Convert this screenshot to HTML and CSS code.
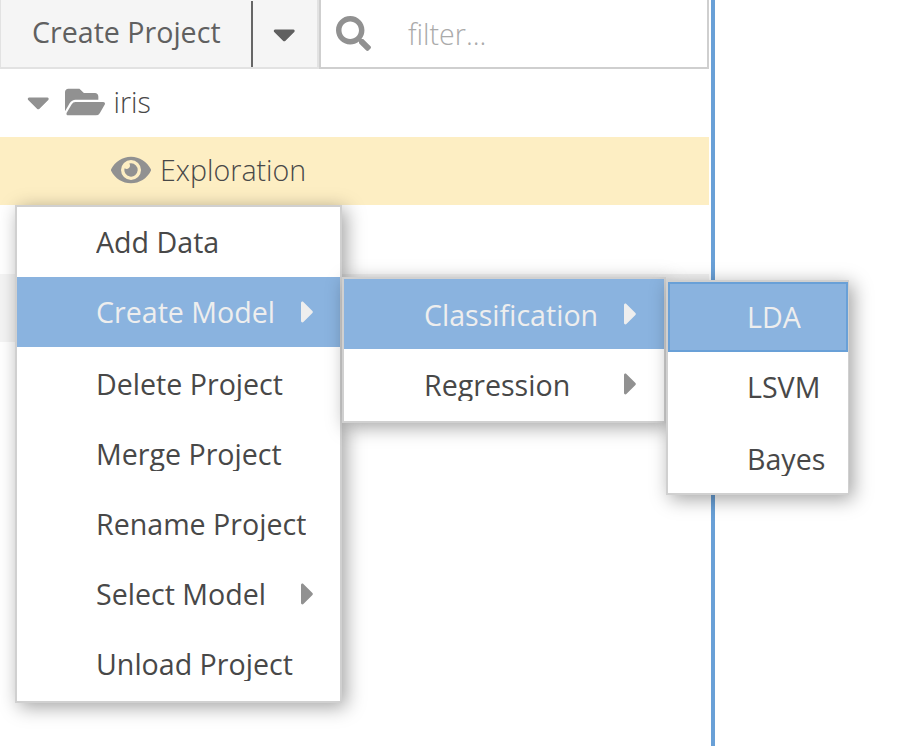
FILE: index.html
```html
<!DOCTYPE html>
<html lang="en">
<head>
<meta charset="utf-8">
<title>Projects</title>
<link rel="stylesheet" href="styles.css">
</head>
<body>
<svg class="defs" aria-hidden="true">
  <symbol id="caret-down" viewBox="0 0 320 512"><path d="M31.3 192h257.3c17.8 0 26.7 21.5 14.1 34.1L174.1 354.8c-7.8 7.8-20.5 7.8-28.3 0L17.2 226.1C4.6 213.5 13.5 192 31.3 192z"/></symbol>
  <symbol id="caret-right" viewBox="0 0 192 512"><path d="M0 384.662V127.338c0-17.818 21.543-26.741 33.941-14.142l128.662 128.662c7.81 7.81 7.81 20.474 0 28.284L33.941 398.804C21.543 411.404 0 402.48 0 384.662z"/></symbol>
  <symbol id="search" viewBox="0 0 512 512"><path d="M505 442.7L405.3 343c-4.5-4.5-10.6-7-17-7H372c27.6-35.3 44-79.7 44-128C416 93.1 322.9 0 208 0S0 93.1 0 208s93.1 208 208 208c48.3 0 92.7-16.4 128-44v16.3c0 6.4 2.5 12.5 7 17l99.7 99.7c9.4 9.4 24.6 9.4 33.9 0l28.3-28.3c9.4-9.4 9.4-24.6.1-34zM208 336c-70.7 0-128-57.2-128-128 0-70.7 57.2-128 128-128 70.7 0 128 57.2 128 128 0 70.7-57.2 128-128 128z"/></symbol>
  <symbol id="folder-open" viewBox="0 0 576 512"><path d="M572.694 292.093L500.27 416.248A63.997 63.997 0 0 1 444.989 448H45.025c-18.523 0-30.064-20.093-20.731-36.093l72.424-124.155A64 64 0 0 1 152 256h399.964c18.523 0 30.064 20.093 20.73 36.093zM152 224h328v-48c0-26.51-21.49-48-48-48H272l-64-64H48C21.49 64 0 85.49 0 112v278.046l69.077-118.418C86.214 242.25 117.989 224 152 224z"/></symbol>
  <symbol id="eye" viewBox="0 0 576 512"><path d="M572.52 241.4C518.29 135.59 410.93 64 288 64S57.68 135.64 3.48 241.41a32.35 32.35 0 0 0 0 29.19C57.71 376.41 165.07 448 288 448s230.32-71.64 284.52-177.41a32.35 32.35 0 0 0 0-29.19zM288 400a144 144 0 1 1 144-144 143.93 143.93 0 0 1-144 144zm0-240a95.31 95.31 0 0 0-25.31 3.79 47.85 47.85 0 0 1-66.9 66.9A95.78 95.78 0 1 0 288 160z"/></symbol>
</svg>
<div class="app">
  <aside class="sidebar">
    <div class="toolbar">
      <div class="split">
        <div class="split-main">Create Project</div>
        <div class="split-drop"><svg class="icon caret"><use href="#caret-down"/></svg></div>
      </div>
      <div class="filter">
        <svg class="icon search"><use href="#search"/></svg>
        <span class="placeholder">filter...</span>
      </div>
    </div>
    <div class="tree">
      <div class="node root">
        <svg class="icon caret"><use href="#caret-down"/></svg>
        <svg class="icon wide"><use href="#folder-open"/></svg>
        <span class="name">iris</span>
      </div>
      <div class="node child selected">
        <svg class="icon wide"><use href="#eye"/></svg>
        <span class="name">Exploration</span>
      </div>
      <div class="node"></div>
      <div class="node striped"></div>
    </div>
  </aside>
</div>

<div class="menu menu-project">
  <div class="item"><span class="label">Add Data</span></div>
  <div class="item active"><span class="label">Create Model</span><svg class="icon arrow"><use href="#caret-right"/></svg></div>
  <div class="item after"><span class="label">Delete Project</span></div>
  <div class="item"><span class="label">Merge Project</span></div>
  <div class="item"><span class="label">Rename Project</span></div>
  <div class="item"><span class="label">Select Model</span><svg class="icon arrow"><use href="#caret-right"/></svg></div>
  <div class="item"><span class="label">Unload Project</span></div>
</div>
<div class="menu menu-create">
  <div class="item active"><span class="label">Classification</span><svg class="icon arrow"><use href="#caret-right"/></svg></div>
  <div class="item"><span class="label">Regression</span><svg class="icon arrow"><use href="#caret-right"/></svg></div>
</div>
<div class="menu menu-class">
  <div class="item active focused"><span class="label">LDA</span></div>
  <div class="item"><span class="label">LSVM</span></div>
  <div class="item after"><span class="label">Bayes</span></div>
</div>
</body>
</html>
```
FILE: styles.css
```css
* { box-sizing: border-box; }
body {
  margin: 0;
  height: 746px;
  overflow: hidden;
  position: relative;
  background: #fff;
  color: #484848;
  font-family: "Open Sans", "Noto Sans", sans-serif;
  font-size: 28.6px;
}
.defs { display: none; }
.icon { display: block; flex: none; fill: #919191; }
.caret { width: 22.5px; height: 36px; }
.wide { width: 40px; height: 36px; }

.app { display: flex; height: 746px; }
.sidebar { width: 715px; padding-right: 2px; border-right: 4px solid #69a0d7; }

.toolbar { display: flex; height: 69px; }
.split {
  display: flex;
  width: 319px;
  background: #f5f5f5;
  border: solid #e2e2e2;
  border-width: 0 2px 2px 1px;
  color: #606060;
}
.split-main {
  width: 252px;
  margin-top: 1px;
  padding-left: 31px;
  line-height: 62px;
  white-space: nowrap;
  border-right: 2px solid #666;
}
.split-drop { padding: 16px 0 0 20px; }
.split-drop .icon { fill: #606060; }
.filter {
  flex: 1;
  display: flex;
  border: solid #cfcfcf;
  border-width: 0 2px 2px;
  padding: 16px 0 0 15px;
}
.search { width: 35px; height: 35px; }
.placeholder {
  margin-left: 37px;
  line-height: 36px;
  font-weight: 300;
  color: #aaa;
}

.node {
  display: flex;
  align-items: center;
  height: 68px;
  padding-bottom: 2px;
  font-weight: 300;
}
.name { line-height: 38px; }
.root { padding-left: 27px; }
.root .wide { margin: 0 9px 0 15px; }
.child { padding-left: 111px; }
.child .wide { margin-right: 9px; }
.selected { background: #fdeec3; }
.striped { margin-top: 1px; background: #f4f4f4; }

.menu {
  position: absolute;
  background: #fff;
  border: 2px solid #d0d0d0;
  box-shadow: 4px 4px 18px rgba(0, 0, 0, 0.37);
}
.menu-project { left: 15px; top: 205px; width: 327px; height: 498px; }
.menu-create { left: 342px; top: 277px; width: 324px; height: 146px; }
.menu-class { left: 666px; top: 280px; width: 183px; height: 215px; border-right-width: 1px; }
.item {
  display: flex;
  align-items: center;
  justify-content: space-between;
  height: 70px;
  padding: 0 26px 0 79px;
}
.menu-create .item { padding: 0 26.5px 0 80px; }
.menu-class .item { padding: 0 12px 0 79px; }
.after { margin-top: 2px; }
.label {
  height: 34px;
  line-height: 34px;
  overflow: hidden;
  white-space: nowrap;
}
.menu-create .label { line-height: 36px; }
.arrow { width: 13.5px; height: 36px; }
.active { background: #8ab3df; color: #eee; }
.active .icon { fill: #eee; }
.focused { box-shadow: inset 0 0 0 2px #69a0d7; }
```
